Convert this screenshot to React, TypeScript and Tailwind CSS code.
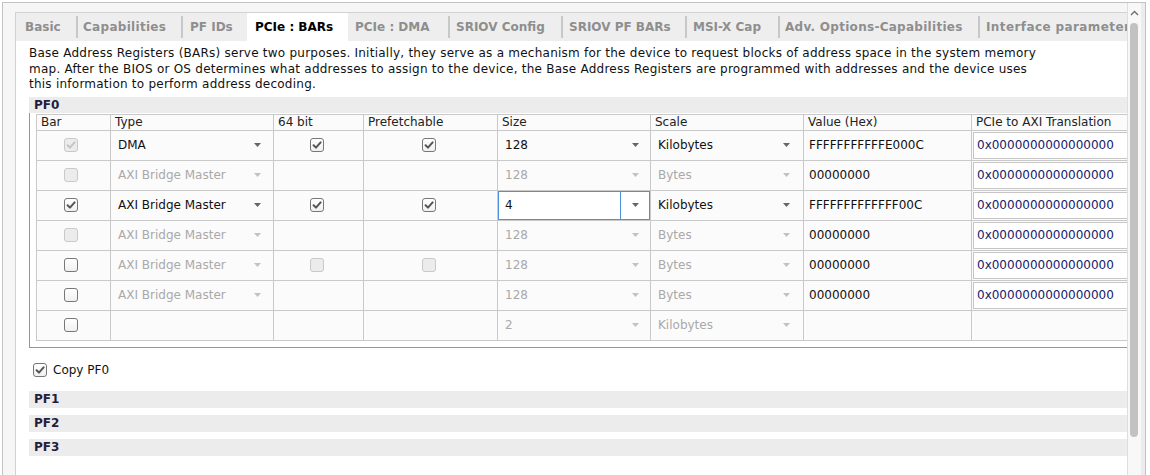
import React from "react";

type CB = "on" | "off" | "don" | "doff" | null;
type Drop = { t: string; d: boolean; focus?: boolean } | null;
type Row = {
  bar: CB;
  type: Drop;
  b64: CB;
  pref: CB;
  size: Drop;
  scale: Drop;
  val: string;
  axi: boolean;
};

const rows: Row[] = [
  { bar: "don", type: { t: "DMA", d: false }, b64: "on", pref: "on", size: { t: "128", d: false }, scale: { t: "Kilobytes", d: false }, val: "FFFFFFFFFFFE000C", axi: true },
  { bar: "doff", type: { t: "AXI Bridge Master", d: true }, b64: null, pref: null, size: { t: "128", d: true }, scale: { t: "Bytes", d: true }, val: "00000000", axi: true },
  { bar: "on", type: { t: "AXI Bridge Master", d: false }, b64: "on", pref: "on", size: { t: "4", d: false, focus: true }, scale: { t: "Kilobytes", d: false }, val: "FFFFFFFFFFFFF00C", axi: true },
  { bar: "doff", type: { t: "AXI Bridge Master", d: true }, b64: null, pref: null, size: { t: "128", d: true }, scale: { t: "Bytes", d: true }, val: "00000000", axi: true },
  { bar: "off", type: { t: "AXI Bridge Master", d: true }, b64: "doff", pref: "doff", size: { t: "128", d: true }, scale: { t: "Bytes", d: true }, val: "00000000", axi: true },
  { bar: "off", type: { t: "AXI Bridge Master", d: true }, b64: null, pref: null, size: { t: "128", d: true }, scale: { t: "Bytes", d: true }, val: "00000000", axi: true },
  { bar: "off", type: null, b64: null, pref: null, size: { t: "2", d: true }, scale: { t: "Kilobytes", d: true }, val: "", axi: false },
];

function Check({ s }: { s: CB }) {
  if (!s) return null;
  const dis = s === "don" || s === "doff";
  const checked = s === "on" || s === "don";
  return (
    <div
      className={
        "w-[14px] h-[14px] rounded-[3px] border flex items-center justify-center " +
        (dis ? "border-[#c9c9c9] bg-[#ececec]" : "border-[#777777] bg-gradient-to-b from-white to-[#f0f0f0]")
      }
    >
      {checked && (
        <svg width="10" height="10" viewBox="0 0 10 10">
          <path
            d="M1.6 5.2 L4 7.6 L8.6 2.4"
            fill="none"
            stroke={dis ? "#c4c4c4" : "#555555"}
            strokeWidth="2"
            strokeLinecap="round"
            strokeLinejoin="round"
          />
        </svg>
      )}
    </div>
  );
}

function Tri({ d }: { d: boolean }) {
  return (
    <svg width="7" height="4" viewBox="0 0 7 4" className="shrink-0">
      <path d="M0 0 L7 0 L3.5 4 Z" fill={d ? "#c2c2c2" : "#666666"} />
    </svg>
  );
}

function DropCell({ v, pr }: { v: Drop; pr: string }) {
  if (!v) return null;
  if (v.focus) {
    return (
      <div className="w-full h-full border border-[#4d93dc] bg-white flex items-center">
        <span className="flex-1 pl-[6px] text-[#111]">{v.t}</span>
        <div className="w-[29px] h-full border-l border-[#4d93dc] flex items-center justify-center">
          <Tri d={false} />
        </div>
      </div>
    );
  }
  return (
    <div className={"w-full h-full flex items-center pl-[7px] " + pr}>
      <span className={"flex-1 " + (v.d ? "text-[#a9a9a9]" : "text-[#111]")}>{v.t}</span>
      <Tri d={v.d} />
    </div>
  );
}

const cell = "border-r border-b border-[#c9c9c9] h-[30px] bg-[#fbfbfb]";
const hcell = "border-r border-b border-[#c9c9c9] h-[16px] leading-[15px] pl-[4px] text-[#222] bg-[#fbfbfb] whitespace-nowrap";

const tabs: { t: string; w: string; pl: string; sep: boolean; tr: string; active?: boolean }[] = [
  { t: "Basic", w: "w-[60px]", pl: "pl-[9px]", sep: false, tr: "" },
  { t: "Capabilities", w: "w-[103px]", pl: "pl-[5px]", sep: true, tr: "tracking-[0.3px]" },
  { t: "PF IDs", w: "w-[64px]", pl: "pl-[7px]", sep: true, tr: "" },
  { t: "PCIe : BARs", w: "w-[101px]", pl: "pl-[8px]", sep: false, tr: "", active: true },
  { t: "PCIe : DMA", w: "w-[100px]", pl: "pl-[7px]", sep: false, tr: "" },
  { t: "SRIOV Config", w: "w-[111px]", pl: "pl-[6px]", sep: true, tr: "" },
  { t: "SRIOV PF BARs", w: "w-[122px]", pl: "pl-[6px]", sep: true, tr: "" },
  { t: "MSI-X Cap", w: "w-[91px]", pl: "pl-[6px]", sep: true, tr: "" },
  { t: "Adv. Options-Capabilities", w: "w-[198px]", pl: "pl-[5px]", sep: true, tr: "tracking-[0.28px]" },
  { t: "Interface parameters", w: "w-[200px]", pl: "pl-[6px]", sep: true, tr: "tracking-[0.4px]" },
];

export default function App() {
  return (
    <div className="w-[1150px] h-[475px] bg-white overflow-hidden pt-[2px] pl-[2px] pr-[4px] font-['DejaVu_Sans',sans-serif] text-[12px]">
      <div className="h-full flex border-t border-l border-r border-[#c2c2c2]">
        {/* scroll content area */}
        <div className="flex-1 min-w-0 bg-[#f6f6f6] pl-[12px] pt-[9px]">
          <div className="h-full border-l border-t border-[#d2d2d2] bg-white flex flex-col overflow-hidden">
            {/* tab bar */}
            <div className="h-[28px] shrink-0 bg-[#eeeeee] flex items-center whitespace-nowrap">
              {tabs.map((tb) => (
                <React.Fragment key={tb.t}>
                  {tb.sep && <div className="w-[2px] h-[22px] bg-[#c8c8c8] shrink-0" />}
                  <div
                    className={
                      "shrink-0 h-full flex items-center font-bold " +
                      tb.w +
                      " " +
                      tb.pl +
                      " " +
                      tb.tr +
                      (tb.active ? " bg-white text-[#000]" : " text-[#8e8e8e]")
                    }
                  >
                    {tb.t}
                  </div>
                </React.Fragment>
              ))}
            </div>

            {/* content */}
            <div className="pl-[13px] pt-[5px] flex flex-col">
              <p className="leading-[15.5px] tracking-[0.24px] text-[#111] whitespace-nowrap">
                Base Address Registers (BARs) serve two purposes. Initially, they serve as a mechanism for the device to request blocks of address space in the system memory
                <br />
                map. After the BIOS or OS determines what addresses to assign to the device, the Base Address Registers are programmed with addresses and the device uses
                <br />
                this information to perform address decoding.
              </p>

              <div className="mt-[4px] h-[16px] bg-[#ececec] pl-[5px] font-bold leading-[16px] text-[#1f1f3d]">PF0</div>

              <div className="border-l border-b border-[#8f98a8] pl-[6px] pb-[6px] pt-[1px]">
                <div className="grid grid-cols-[74px_163px_90px_134px_153px_153px_168px_200px] w-max border-l border-t border-[#c9c9c9]">
                  <div className={hcell}>Bar</div>
                  <div className={hcell}>Type</div>
                  <div className={hcell}>64 bit</div>
                  <div className={hcell}>Prefetchable</div>
                  <div className={hcell}>Size</div>
                  <div className={hcell}>Scale</div>
                  <div className={hcell}>Value (Hex)</div>
                  <div className={hcell}>PCIe to AXI Translation</div>
                  {rows.map((r, i) => (
                    <React.Fragment key={i}>
                      <div className={cell + " flex items-center justify-center pr-[5px]"}>
                        <Check s={r.bar} />
                      </div>
                      <div className={cell}>
                        <DropCell v={r.type} pr="pr-[12px]" />
                      </div>
                      <div className={cell + " flex items-center justify-center pr-[4px]"}>
                        <Check s={r.b64} />
                      </div>
                      <div className={cell + " flex items-center justify-center pr-[4px]"}>
                        <Check s={r.pref} />
                      </div>
                      <div className={cell}>
                        <DropCell v={r.size} pr="pr-[11px]" />
                      </div>
                      <div className={cell}>
                        <DropCell v={r.scale} pr="pr-[13px]" />
                      </div>
                      <div className={cell + " flex items-center pl-[5px] text-[#111]"}>{r.val}</div>
                      <div className={cell + " pl-[1px] pt-[1px] pb-[1px]"}>
                        {r.axi && (
                          <div className="h-full border border-[#c6c6c6] bg-white flex items-center pl-[3px] text-[#15206a]">
                            0x0000000000000000
                          </div>
                        )}
                      </div>
                    </React.Fragment>
                  ))}
                </div>
              </div>

              <div className="mt-[15px] flex items-center pl-[4px] h-[14px]">
                <Check s="on" />
                <span className="ml-[6px] text-[#111]">Copy PF0</span>
              </div>

              <div className="mt-[14px] flex flex-col gap-[7px]">
                {["PF1", "PF2", "PF3"].map((p) => (
                  <div key={p} className="h-[17px] bg-[#ececec] pl-[5px] font-bold leading-[17px] text-[#1f1f3d]">
                    {p}
                  </div>
                ))}
              </div>
            </div>
          </div>
        </div>

        {/* scrollbar */}
        <div className="w-[14px] shrink-0 border-l border-[#dedede] bg-[#f8f8f8] flex flex-col items-start">
          <div className="h-[20px] w-full flex items-start justify-center pt-[7px]">
            <svg width="9" height="6" viewBox="0 0 9 6">
              <path d="M1 5 L4.5 1.5 L8 5" fill="none" stroke="#6a6a6a" strokeWidth="1.3" />
            </svg>
          </div>
          <div className="ml-[2px] w-[8px] h-[414px] rounded-[4px] bg-[#c2c2c2]" />
        </div>
        <div className="w-[4px] shrink-0 bg-[#ececec]" />
      </div>
    </div>
  );
}
